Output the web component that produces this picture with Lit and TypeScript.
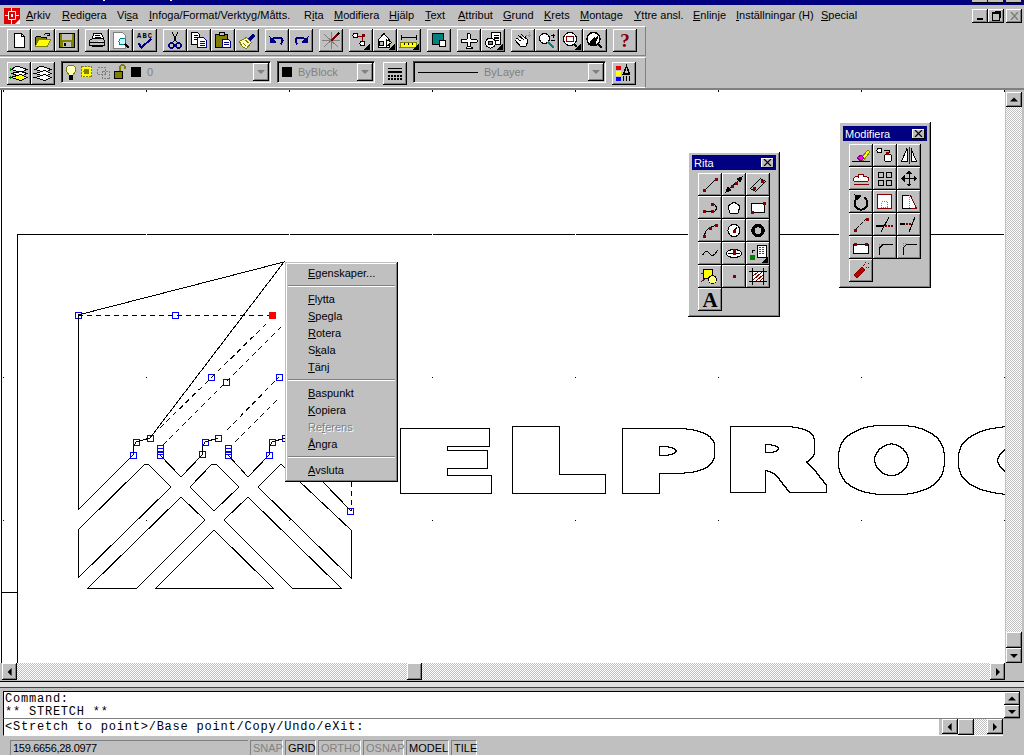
import { LitElement, css, html, svg } from "lit";
import { customElement } from "lit/decorators.js";

// small dark red grip used by the drawing tools
const grip = (x: number, y: number) =>
  svg`<rect x=${x - 1} y=${y - 1} width="3" height="3" fill="#800000" stroke="none"/>`;

const ICONS: Record<string, unknown> = {
  // standard toolbar
  new: svg`<path d="M4.500 1.500h7l3 3v11h-10z" fill="#fff"/><path d="M11.500 1.500v3h3"/>`,
  open: svg`<path d="M1.500 14.500v-9l1-1h4l1 1h5v2" fill="#808000"/><path d="M1.500 14.500l3-7h12l-3 7z" fill="#ffff00" stroke="#808000"/><path d="M9.500 3.500c1-2 3-2.500 5-1.500M15.500 0.500v3h-3"/>`,
  save: svg`<rect x="1.500" y="1.500" width="15" height="14" fill="#808000"/><rect x="4" y="2" width="10" height="6" fill="#c0c0c0" stroke="none"/><rect x="5" y="10" width="8" height="5" fill="#c0c0c0" stroke="none"/><rect x="6" y="11" width="2" height="3" fill="#000" stroke="none"/>`,
  print: svg`<path d="M5.500 1.500h8l2 5h-11z" fill="#fff"/><path d="M1.500 8.500l3-2h10l2 2v5h-15z" fill="#c0c0c0"/><path d="M1.500 10.500h15M3.500 14.500h11"/><rect x="10" y="9" width="4" height="1" fill="#ffff00" stroke="none"/><path d="M6.500 3.500h5M6.500 5h6"/>`,
  preview: svg`<path d="M1.500 0.500h9l3 3v13h-12z" fill="#fff" stroke="#808080"/><circle cx="10.500" cy="9.500" r="3.500" fill="#c0ffff" stroke="#008080"/><path d="M13 12l4 4" stroke-width="2"/>`,
  spell: svg`<text x="1" y="6" font-size="7" font-weight="700" font-family="Liberation Mono" fill="#000" stroke="none" textLength="15">ABC</text><path d="M2.500 11.500l3 4 10-9" stroke="#000080" stroke-width="2"/>`,
  cut: svg`<path d="M6.500 0.500l4 10M11.500 0.500l-4 10"/><circle cx="5.500" cy="13.500" r="2.500" stroke="#000080" stroke-width="1.500"/><circle cx="12.500" cy="13.500" r="2.500" stroke="#000080" stroke-width="1.500"/>`,
  copy: svg`<path d="M1.500 0.500h6l2 2v10h-8z" fill="#fff"/><path d="M3.500 3.500h4M3.500 5.500h4M3.500 7.500h4"/><path d="M7.500 5.500h6l3 3v7h-9z" fill="#fff" stroke="#000080"/><path d="M9.500 9.500h5M9.500 11.500h5M9.500 13.500h5" stroke="#000080"/>`,
  paste: svg`<rect x="1.500" y="2.500" width="12" height="13" fill="#808000"/><rect x="5" y="0.500" width="5" height="3" fill="#c0c0c0"/><path d="M8.500 7.500h6l2 2v6h-8z" fill="#fff" stroke="#000080"/><path d="M10 10.500h5M10 12.500h5" stroke="#000080"/>`,
  match: svg`<path d="M10 7l5-5 2 2-5 5z" fill="#000080" stroke="#000080"/><path d="M1.500 9.500l7-4 5 5-5 6c-3 0-6-4-7-7z" fill="#ffffc0" stroke="#808000"/><path d="M5 11l3 3M7.500 8l3 3" stroke="#808000"/>`,
  undo: svg`<path d="M3.500 8.500c3-4 10-4 11 0 0 2-1 3-2 4" stroke="#000080" stroke-width="2"/><path d="M2 5l1 6 5-1z" fill="#000080" stroke="#000080"/>`,
  redo: svg`<path d="M14.500 8.500c-3-4-10-4-11 0 0 2 1 3 2 4" stroke="#000080" stroke-width="2"/><path d="M16 5l-1 6-5-1z" fill="#000080" stroke="#000080"/>`,
  snapstar: svg`<path d="M9 0v17M0 8.500h18M2 2l14 13M2 15L16 2" stroke="#808080"/><path d="M9 9l6-6" stroke="#800000" stroke-width="2"/><path d="M15 3l2-2" stroke-width="2"/>`,
  osnap: svg`<circle cx="3.500" cy="3.500" r="2.500" fill="#fff"/><circle cx="10.500" cy="11.500" r="2.500" fill="#fff"/><path d="M6 4h6M10.500 5v4" stroke="#800000"/>${grip(11, 3)}<path d="M17 13v4h-4z" fill="#000"/>`,
  block: svg`<path d="M2.500 7.500L8 1.500l5 6v8h-10.500z" fill="#fff"/><rect x="3.500" y="9.500" width="4" height="4" fill="#c0c0c0"/><path d="M10.500 7.500l5 3-5 4z" fill="#ffffc0"/><path d="M18 13v4h-4z" fill="#000"/>`,
  dim: svg`<path d="M1.500 5.500h15M1.500 3v5M16.500 3v5"/><path d="M1 10h16l-1 5H0z" fill="#ffff00" stroke="#808000"/><path d="M4.500 11v2M8.500 11v2M12.500 11v2" stroke="#000"/><path d="M18 13v4h-4z" fill="#000"/>`,
  layerbox: svg`<rect x="2" y="1" width="11" height="11" fill="#008080" stroke="#000"/><rect x="9.500" y="8.500" width="6" height="6" fill="#fff" stroke="#000"/>`,
  plane: svg`<path d="M8 1.500h2l1 5.500 6 1v2l-6 .5-1 4 2 1v1H6v-1l2-1-1-4-6-.5v-2l6-1z" fill="#fff"/>`,
  xref: svg`<rect x="7.500" y="0.500" width="9" height="12" fill="#fff"/><path d="M9.500 3.500h5M9.500 6h5M9.500 8.500h5" stroke-width="1.500"/><circle cx="6.500" cy="11" r="5" fill="#fff"/><circle cx="6.500" cy="11" r="2" fill="#808080"/><path d="M18 13v4h-4z" fill="#000"/>`,
  pan: svg`<path d="M2 6l5 3M4 3l6 5M7 2l5 5M11 4l3 5-2 5-5 1-6-7" fill="#fff"/><path d="M12 3h6M15 0v6" stroke="#808080" stroke-dasharray="1 1"/>`,
  zoom: svg`<circle cx="6.500" cy="6.500" r="5" fill="#fff"/><path d="M10 10l6 6" stroke="#008080" stroke-width="2"/><path d="M13 3.500h4M15 1.500v4M13 8h4"/>`,
  zoomwin: svg`<circle cx="8" cy="7" r="6.500" fill="#fff"/><rect x="4.500" y="4.500" width="7" height="5" stroke="#800000"/><path d="M12 12l3 3" stroke-width="2"/><path d="M18 13v4h-4z" fill="#000"/>`,
  zoomprev: svg`<circle cx="7.500" cy="7" r="6.500" fill="#fff" stroke-width="1.500"/><path d="M3 12l5-6 0 3 4-5-3 8z" fill="#000"/><path d="M12 12l4 4" stroke-width="2"/>`,
  help: svg`<text x="9" y="15" text-anchor="middle" font-size="19" font-weight="700" font-family="Liberation Serif" fill="#800000" stroke="none">?</text>`,
  // layer toolbar
  layers: svg`<path d="M1 4.500L7 1l10 3.500-6 3z" fill="#fff"/><path d="M1 8.500l10 3 6-3-6-2z" fill="#fff"/><path d="M1 12.500l10 3 6-3-6-3-4 1z" fill="#ffff00"/><path d="M0 3v3M0 11v3" stroke="#008000"/>`,
  layers2: svg`<path d="M1 4.500L7 1l10 3.500-6 3z" fill="#fff"/><path d="M1 8.500l10 3 6-3-6-3z" fill="#fff"/><path d="M1 12.500l10 3 6-3-6-3z" fill="#fff"/>`,
  // draw palette
  line: svg`<path d="M3.500 14.500l11-11"/>${grip(3, 14)}${grip(15, 3)}`,
  ray: svg`<path d="M1 15.500l16-14"/><path d="M1 16l2-5 3 3zM17 1l-2 5-3-3z" fill="#000"/>${grip(7, 10)}${grip(11, 7)}`,
  xline: svg`<path d="M1.500 12.500l10-10 5 3-10 10z"/>${grip(5, 12)}${grip(13, 5)}`,
  pline: svg`<path d="M3.500 12.500h9c4-1 4-8-2-7" />${grip(3, 12)}${grip(11, 12)}${grip(11, 5)}`,
  polygon: svg`<path d="M9 3l6 4-2 7H5L3 7z" fill="#fff"/>`,
  rect: svg`<rect x="2.500" y="4.500" width="13" height="9" fill="#fff"/>${grip(3, 13)}${grip(15, 4)}`,
  arc: svg`<path d="M3.500 14.500c0-7 6-10 11-11"/>${grip(3, 14)}${grip(15, 3)}${grip(9, 6)}`,
  circle: svg`<circle cx="9" cy="8.500" r="6" fill="#fff"/><path d="M9 8.500l3-3"/>${grip(9, 9)}`,
  donut: svg`<circle cx="9" cy="8.500" r="5" stroke-width="3.500"/>`,
  spline: svg`<path d="M1.500 10.500c3-6 5-5 7-2s4 3 8-3"/>`,
  ellipse: svg`<ellipse cx="9" cy="8.500" rx="7.500" ry="4" fill="#fff"/><path d="M3 8.500h12"/>${grip(9, 8)}${grip(9, 5)}`,
  insert: svg`<rect x="8.500" y="0.500" width="9" height="12" fill="#fff"/><path d="M10 2h6M10 4h6M10 6h6M10 8h6" stroke="#008000" stroke-dasharray="2 1"/><rect x="1" y="10" width="5" height="5" fill="#008000" stroke="none"/><path d="M3 8c0-3 1-3 3-3"/><path d="M18 13v4h-4z" fill="#000"/>`,
  hatch: svg`<rect x="2.500" y="1.500" width="9" height="9" fill="#ffff00"/><circle cx="11.500" cy="11.500" r="4" fill="#ffff80"/><path d="M0 5.500h3M0 13.500l5-3" stroke="#800000"/>`,
  point: svg`${grip(9, 8)}`,
  region: svg`<rect x="3.500" y="3.500" width="11" height="10" fill="#fff" stroke="#800000"/><path d="M4 8l5-4M4 12l9-8M7 13l7-6M11 13l3-3" stroke="#800000"/><path d="M0 3.500h18M0 13.500h18M3.500 0v17M14.500 0v17"/>`,
  text: svg`<text x="9" y="16" text-anchor="middle" font-size="21" font-weight="700" font-family="Liberation Serif" fill="#000" stroke="none">A</text>`,
  // modify palette
  erase: svg`<path d="M0 14.500h18" /><path d="M8 12l8-9 2 2-7 9z" fill="#ffff00" stroke="#808000"/><path d="M5 11l4-3 3 3-3 3z" fill="#ff00ff" stroke="#800080"/>`,
  copyobj: svg`<circle cx="3.500" cy="3.500" r="2.500" fill="#fff"/><circle cx="12" cy="11" r="4" fill="#fff"/><path d="M8 3h6l-1 3"/>${grip(11, 6)}`,
  mirror: svg`<path d="M9 0v17" stroke="#800000"/><path d="M7 1.500v13H1.500z" fill="#fff"/><path d="M11 1.500v13h5.500z" fill="#fff"/>`,
  offset: svg`<path d="M2 11c-2-3 2-5 4-4 0-4 6-4 6 0 3-1 6 1 4 4z" fill="#fff" stroke="#800000"/><path d="M1.500 14.500h15" stroke="#800000"/>`,
  array: svg`<rect x="2.500" y="2.500" width="5" height="5"/><rect x="10.500" y="2.500" width="5" height="5"/><rect x="2.500" y="10.500" width="5" height="5"/><rect x="10.500" y="10.500" width="5" height="5"/>`,
  move: svg`<path d="M9 2v13M3 8.500h12"/><path d="M9 1l2 2H7zM9 16l2-2H7zM2 8.500l2-2v4zM16 8.500l-2-2v4z" fill="#000"/>`,
  rotate: svg`<path d="M6 4.500a6.500 6.500 0 1 0 6 0" stroke-width="2"/><path d="M3 2l6 1-4 4z" fill="#000"/>`,
  scale: svg`<path d="M1.500 1.500h14v14h-14z" fill="#fff" stroke="#800000"/><path d="M5.500 8.500h6v6h-6z" stroke="#808080" stroke-dasharray="1 1"/>`,
  stretch: svg`<path d="M2.500 2.500h8l6 13h-14z" fill="#fff"/><path d="M10.500 2.500l6 13h-6" stroke="#800000"/><path d="M9.500 2v13" stroke="#808080" stroke-dasharray="1 1"/>`,
  lbreak: svg`<path d="M4 13l3-3M8 9l3-3M12 5l2-2" stroke="#000"/>${grip(3, 14)}${grip(15, 3)}`,
  trim: svg`<path d="M13 1L5 16"/><path d="M0 9.500h8" stroke-width="2"/><path d="M9 9.500h8" stroke="#800000" stroke-width="2" stroke-dasharray="2 1"/>`,
  extend: svg`<path d="M15 1L9 16"/><path d="M0 7.500h5" stroke-width="2"/><path d="M6 7.500h6" stroke="#800000" stroke-width="2" stroke-dasharray="2 1"/>`,
  stretchbox: svg`<rect x="1.500" y="5.500" width="15" height="9" fill="#fff"/>${grip(3, 5)}${grip(14, 5)}`,
  chamfer: svg`<path d="M3.500 16V9l4-4H17"/><path d="M3.500 8V5.500H6" stroke="#808080" stroke-dasharray="1 1"/>`,
  fillet: svg`<path d="M3.500 16V10c0-3 3-5 6-5H17"/><path d="M3.500 7V4.500H7" stroke="#808080" stroke-dasharray="1 1"/>`,
  explode: svg`<path d="M2 13l8-8 3 3-8 8z" fill="#c00000" stroke="#800000"/><path d="M11 4l2-2M14 6l3-1M13 1l1-1M16 2l2-1" stroke="#800000" stroke-dasharray="1 1"/>`,
};

const TOOLBAR_ONE = [
  ["new", "open", "save"],
  ["print", "preview", "spell"],
  ["cut", "copy", "paste", "match"],
  ["undo", "redo"],
  ["snapstar"],
  ["osnap", "block", "dim"],
  ["layerbox"],
  ["plane", "xref"],
  ["pan", "zoom", "zoomwin", "zoomprev"],
  ["help"],
];

const RITA = ["line", "ray", "xline", "pline", "polygon", "rect", "arc", "circle", "donut", "spline", "ellipse", "insert", "hatch", "point", "region", "text"];
const MODIFIERA = ["erase", "copyobj", "mirror", "offset", "array", "move", "rotate", "scale", "stretch", "lbreak", "trim", "extend", "stretchbox", "chamfer", "fillet", "explode"];

// label, index of the underlined letter, left edge on the menu bar
const MENU: [string, number, number][] = [
  ["Arkiv", 0, 26], ["Redigera", 0, 62], ["Visa", 2, 117], ["Infoga/Format/Verktyg/Måtts.", 0, 149],
  ["Rita", 1, 304], ["Modifiera", 0, 334], ["Hjälp", 0, 389], ["Text", 0, 425], ["Attribut", 0, 458],
  ["Grund", 0, 503], ["Krets", 0, 544], ["Montage", 0, 580], ["Yttre ansl.", 0, 634], ["Enlinje", 0, 693],
  ["Inställningar (H)", 0, 736], ["Special", 0, 821],
];

const CONTEXT: (null | [string, number, boolean?])[] = [
  ["Egenskaper...", 0], null,
  ["Flytta", 0], ["Spegla", 0], ["Rotera", 0], ["Skala", 1], ["Tänj", 0], null,
  ["Baspunkt", 0], ["Kopiera", 0], ["Referens", 2, true], ["Ångra", 0], null,
  ["Avsluta", 0],
];

// x, scale for each outlined letter of the title block; square letters get the fatter outline
const LOGO_SQUARE: [string, number, number][] = [["E", 399, 1.66], ["L", 509.7, 1.73]];
const LOGO_ROUND: [string, number, number][] = [["P", 615.8, 1.67], ["R", 724.3, 1.6], ["O", 837.8, 1.56], ["C", 957, 1.75]];

const GRID_X = [3, 146, 289, 432, 575, 718, 861, 1004];
const GRID_Y = [377, 520];

const HANDLES = [
  [78, 315], [175, 315], [211, 377], [226, 382], [279, 377], [136, 442], [150, 438], [133, 455],
  [160, 448], [160, 451], [160, 455], [205, 442], [218, 438], [202, 454], [228, 448], [228, 451],
  [228, 455], [272, 442], [285, 438], [269, 455], [350, 511],
];

const SOLID = [
  "M78 315L284 262L150 438M78 315V510L133 455V448L136 442L150 438",
  "M160 455L181 477L202 455V448L205 442L218 438M228 455L248 477L269 455V448L272 442L285 438",
  "M78 530L145 464H148L171 487L78 578Z",
  "M190 487L212 464H216L239 487L214 511Z",
  "M88 588H137L205 520L181 497Z",
  "M156 588H273L214 530Z",
  "M224 520L248 497L341 588H292Z",
  "M258 487L281 464L351 530V578Z",
  "M323 482L351 511",
  "M17 663V234H1005M1 90V663M1 592H17M0 663H1005",
];

const DASHED = [
  "M78 315H272",
  "M160 428L267 323",
  "M163 445L283 325",
  "M227 430L279 377",
  "M235 442L280 397",
  "M351 482V511",
];

const arrow = (dir: "up" | "down" | "left" | "right") => html`<span class="arrow ${dir}"></span>`;

const logoLetters = (letters: [string, number, number][]) =>
  letters.map(([ch, x, sx]) => svg`
    <text transform="translate(${x} 490) scale(${sx} 1)" font-family="DejaVu Sans" font-weight="700" font-size="81">${ch}</text>
  `);

const outlineFilter = (id: string, radius: string) => svg`
  <filter id=${id} filterUnits="userSpaceOnUse" x="380" y="410" width="720" height="100">
    <feComponentTransfer in="SourceAlpha" result="hard">
      <feFuncA type="discrete" tableValues="0 1"/>
    </feComponentTransfer>
    <feMorphology in="hard" operator="dilate" radius=${radius} result="fat"/>
    <feMorphology in="fat" operator="dilate" radius="1" result="edge"/>
    <feComposite in="edge" in2="fat" operator="out"/>
  </filter>
`;

@customElement("app-root")
export class AppRoot extends LitElement {
  private icon(name: string) {
    return html`<svg class="ico" width="18" height="17" viewBox="0 0 18 17">${ICONS[name]}</svg>`;
  }

  private tool(name: string) {
    return html`<div class="btn">${this.icon(name)}</div>`;
  }

  private accel(label: string, index: number) {
    return html`${label.slice(0, index)}<u>${label[index]}</u>${label.slice(index + 1)}`;
  }

  private palette(title: string, cls: string, tools: string[]) {
    return html`
      <div class="palette ${cls}">
        <div class="caption">
          <span>${title}</span>
          <div class="caption-close">
            <svg width="9" height="7" viewBox="0 0 9 7"><path d="M1 0l7 7M8 0L1 7" stroke="#000" fill="none" stroke-width="1.200"/></svg>
          </div>
        </div>
        <div class="palette-grid">${tools.map((t) => this.tool(t))}</div>
      </div>
    `;
  }

  private renderDrawing() {
    return html`
      <svg class="drawing" width="1005" height="573" viewBox="0 90 1005 573">
        <defs>
          ${outlineFilter("outline-square", "10 3")}
          ${outlineFilter("outline-round", "5 3")}
        </defs>
        ${HANDLES.map(([x, y]) => svg`<path d="M${x - 3} ${y - 3}h7v7h-7zM${x - 2} ${y - 2}v5h5v-5z" fill="#0000ff"/>`)}
        ${SOLID.map((d) => svg`<path d=${d} fill="none" stroke="#000" shape-rendering="crispEdges"/>`)}
        ${DASHED.map((d) => svg`<path d=${d} fill="none" stroke="#000" stroke-dasharray="5 4" shape-rendering="crispEdges"/>`)}
        ${GRID_X.map((x) => svg`
          <rect x=${x} y="234" width="1" height="1" fill="#fff"/>
          <rect x=${x} y="662" width="1" height="1" fill="#fff"/>
          <rect x=${x} y="90" width="1" height="2" fill="#000"/>
          ${GRID_Y.map((y) => svg`<rect x=${x} y=${y} width="1" height="1" fill="#000"/>`)}
        `)}
        <g filter="url(#outline-square)">${logoLetters(LOGO_SQUARE)}</g>
        <g filter="url(#outline-round)">${logoLetters(LOGO_ROUND)}</g>
        <rect x="269" y="312" width="7" height="7" fill="#ff0000"/>
      </svg>
    `;
  }

  render() {
    return html`
      <div class="titlebar">
        <span class="title-bit one"></span><span class="title-bit two"></span>
        <div class="title-buttons"><i></i><i></i><i class="last"></i></div>
      </div>

      <div class="menubar">
        <svg class="app-icon" width="16" height="16" viewBox="0 0 16 16">
          <rect width="16" height="16" fill="#e00000"/>
          <path d="M4.500 3.500h7v8h-7zM1 7.500h3.500M11.500 7.500H15M7.500 0v3.500M7.500 11.500V16" fill="none" stroke="#fff"/>
          <rect x="7" y="6" width="2" height="3" fill="#fff"/>
          <path d="M11 16l5-5v5z" fill="#fff"/>
        </svg>
        ${MENU.map(([label, i, x], n) => html`<span class="menu-item" style="margin-left:${n === 0 ? x - 21 : x - MENU[n - 1][2] - this.menuWidth(MENU[n - 1][0])}px;width:${this.menuWidth(label)}px">${this.accel(label, i)}</span>`)}
        <div class="win-buttons">
          <div class="win-btn"><span class="glyph-min"></span></div>
          <div class="win-btn"><span class="glyph-restore"></span></div>
          <div class="win-btn close">
            <svg width="9" height="8" viewBox="0 0 9 8"><path d="M1 0l7 8M8 0L1 8" stroke="#808080" stroke-width="1.500" fill="none"/></svg>
          </div>
        </div>
      </div>

      <div class="toolbars">
        <div class="toolbar first">
          ${TOOLBAR_ONE.map((group) => html`<div class="group">${group.map((t) => this.tool(t))}</div>`)}
        </div>
        <div class="toolbar second">
          <div class="group">${this.tool("layers")}${this.tool("layers2")}</div>
          <div class="combo layer">
            <svg class="ico" width="65" height="17" viewBox="0 0 65 17">
              <path d="M3 11C-1 7 0 1 5 1s6 6 2 10z" fill="#ffffc0" stroke="#808000"/>
              <path d="M3.500 11.500h3v4h-3z" fill="#000"/>
              <rect x="15.500" y="2.500" width="10" height="10" fill="#ffff00" stroke="#808000" stroke-dasharray="2 1"/>
              <circle cx="20.500" cy="7.500" r="3" fill="#808000" stroke="none"/>
              <path d="M31.500 3.500h8v7h-8zM36.500 7.500h7v7h-7z" stroke="#808080" stroke-dasharray="2 1"/>
              <rect x="48.500" y="7.500" width="8" height="7" fill="#808000"/>
              <path d="M54 7V3c0-3 5-3 5 0v2" stroke="#808000" stroke-width="1.500"/>
            </svg>
            <span class="swatch"></span>
            <span class="combo-text">0</span>
            <span class="combo-arrow"></span>
          </div>
          <div class="combo color">
            <span class="swatch"></span>
            <span class="combo-text">ByBlock</span>
            <span class="combo-arrow"></span>
          </div>
          <div class="btn linetype-btn">
            <svg class="ico" width="18" height="17" viewBox="0 0 18 17">
              <path d="M2 3.500h14"/><path d="M2 7h14" stroke-width="2"/><path d="M2 11h14M2 13.500h14" stroke-width="2" stroke-dasharray="2 1"/>
            </svg>
          </div>
          <div class="combo linetype">
            <span class="line-sample"></span>
            <span class="combo-text">ByLayer</span>
            <span class="combo-arrow"></span>
          </div>
          <div class="btn">
            <svg class="ico" width="18" height="17" viewBox="0 0 18 17">
              <rect x="1" y="1" width="5" height="4" fill="#e00000" stroke="none"/>
              <rect x="1" y="6" width="5" height="5" fill="#ffff00" stroke="none"/>
              <rect x="1" y="12" width="5" height="4" fill="#0000ff" stroke="none"/>
              <path d="M11.500 1l-3 8h6zM8.500 11v5M11.500 11v5M14.500 11v5" stroke-width="1.500"/>
            </svg>
          </div>
        </div>
      </div>
      <div class="canvas-rule"></div>

      <div class="workspace">
        <div class="canvas">${this.renderDrawing()}</div>
        <div class="vscroll">
          <div class="sbtn">${arrow("up")}</div>
          <div class="track"></div>
          <div class="sbtn plain"></div>
          <div class="sbtn">${arrow("down")}</div>
        </div>
      </div>

      <div class="hscroll">
        <div class="sbtn">${arrow("left")}</div>
        <div class="track"><div class="sbtn plain"></div></div>
        <div class="sbtn">${arrow("right")}</div>
        <div class="corner"></div>
      </div>
      <div class="divider"></div>

      <div class="command">
        <div class="cmd-history">
          <div class="cmd-lines"><div>Command:</div><div>** STRETCH **</div></div>
          <div class="cmd-spin">
            <div class="sbtn">${arrow("up")}</div>
            <div class="sbtn">${arrow("down")}</div>
          </div>
        </div>
        <div class="cmd-input">
          <div class="cmd-field">&lt;Stretch to point&gt;/Base point/Copy/Undo/eXit:</div>
          <div class="cmd-hscroll">
            <div class="sbtn">${arrow("left")}</div>
            <div class="sbtn plain"></div>
            <div class="track"></div>
            <div class="sbtn">${arrow("right")}</div>
          </div>
        </div>
      </div>

      <div class="status">
        <div class="coords">159.6656,28.0977</div>
        <div class="pane off snap">SNAP</div>
        <div class="pane grid">GRID</div>
        <div class="pane off ortho">ORTHO</div>
        <div class="pane off osnap">OSNAP</div>
        <div class="pane model">MODEL</div>
        <div class="pane tile">TILE</div>
      </div>

      ${this.palette("Rita", "rita", RITA)}
      ${this.palette("Modifiera", "modifiera", MODIFIERA)}

      <div class="context">
        ${CONTEXT.map((item) =>
          item
            ? html`<div class="context-item ${item[2] ? "disabled" : ""}">${this.accel(item[0], item[1])}</div>`
            : html`<div class="context-sep"></div>`
        )}
      </div>
    `;
  }

  // the old system font is a little narrower or wider per label, so each slot keeps its reference width
  private menuWidth(label: string) {
    const i = MENU.findIndex((m) => m[0] === label);
    const next = i < MENU.length - 1 ? MENU[i + 1][2] : 864;
    return next - MENU[i][2] - 8;
  }

  static styles = css`
    :host {
      display: flex;
      flex-direction: column;
      position: relative;
      width: 1024px;
      height: 755px;
      overflow: hidden;
      background: #c0c0c0;
      font-family: "Liberation Sans", Arial, sans-serif;
      font-size: 11px;
      color: #000;
    }

    .ico {
      display: block;
      flex: none;
      fill: none;
      stroke: #000;
      stroke-width: 1;
      shape-rendering: crispEdges;
      overflow: visible;
    }

    .titlebar {
      position: relative;
      height: 5px;
      background: #000080;
    }

    .title-bit {
      position: absolute;
      top: 0;
      height: 1px;
      width: 2px;
      background: #fff;
    }

    .title-bit.one { left: 103px; }
    .title-bit.two { left: 170px; }

    .title-buttons {
      position: absolute;
      left: 972px;
      top: 0;
      display: flex;
      gap: 1px;
    }

    .title-buttons i {
      display: block;
      width: 15px;
      height: 2px;
      background: #c0c0c0;
      border-bottom: 1px solid #000;
    }

    .title-buttons .last { margin-left: 2px; }

    .menubar {
      display: flex;
      align-items: center;
      height: 21px;
      flex: none;
      position: relative;
      padding-left: 5px;
    }

    .app-icon {
      position: absolute;
      left: 4px;
      top: 3px;
    }

    .menu-item {
      flex: none;
      margin-top: -1px;
      white-space: nowrap;
      padding-left: 16px;
      box-sizing: content-box;
    }

    .menu-item:not(:first-of-type) { padding-left: 0; }

    .win-buttons {
      position: absolute;
      left: 972px;
      top: 4px;
      display: flex;
    }

    .win-btn {
      width: 16px;
      height: 14px;
      display: flex;
      align-items: center;
      justify-content: center;
      box-shadow: inset -1px -1px #000, inset 1px 1px #fff, inset -2px -2px #808080;
      position: relative;
    }

    .win-btn.close { margin-left: 2px; }

    .glyph-min {
      width: 6px;
      height: 2px;
      background: #000;
      margin-top: 6px;
    }

    .glyph-restore {
      width: 6px;
      height: 6px;
      border: 1px solid #000;
      border-top-width: 2px;
      box-shadow: 2px -2px 0 -1px #000;
    }

    .toolbars {
      flex: none;
      display: flex;
      flex-direction: column;
      gap: 1px;
      width: 646px;
    }

    .toolbar {
      display: flex;
      box-sizing: border-box;
      gap: 6px;
      padding-left: 7px;
      border-top: 1px solid #fff;
      border-right: 1px solid #808080;
      border-bottom: 1px solid #808080;
    }

    .toolbar.first {
      height: 30px;
      padding-top: 2px;
    }

    .toolbar.second {
      height: 31px;
      padding-top: 4px;
      border-bottom-color: #fff;
    }

    .group { display: flex; }

    .btn {
      flex: none;
      display: flex;
      align-items: center;
      justify-content: center;
      width: 24px;
      height: 23px;
      box-sizing: border-box;
      background: #c0c0c0;
      box-shadow: inset -1px -1px #000, inset 1px 1px #fff, inset -2px -2px #808080;
    }

    .linetype-btn { margin-left: 2px; }

    .combo {
      flex: none;
      display: flex;
      align-items: center;
      position: relative;
      box-sizing: border-box;
      height: 22px;
      margin-top: -1px;
      padding-left: 4px;
      border: 1px solid;
      border-color: #404040 #fff #fff #404040;
      box-shadow: inset 1px 1px #000;
      color: #808080;
      font-size: 11px;
    }

    .combo.layer { width: 210px; }
    .combo.color { width: 98px; }
    .combo.linetype { width: 193px; }

    .swatch {
      width: 10px;
      height: 10px;
      background: #000;
      margin-right: 5px;
      flex: none;
    }

    .line-sample {
      width: 60px;
      height: 1px;
      background: #000;
      margin: 0 5px 0 0;
    }

    .combo-text { margin-left: 1px; }

    .combo-arrow {
      position: absolute;
      right: 1px;
      top: 1px;
      width: 16px;
      height: 18px;
      box-shadow: inset -1px -1px #000, inset 1px 1px #fff, inset -2px -2px #808080;
    }

    .combo-arrow::after {
      content: "";
      position: absolute;
      left: 4px;
      top: 7px;
      border: 4px solid transparent;
      border-top: 4px solid #808080;
      border-bottom: 0;
    }

    .canvas-rule {
      flex: none;
      height: 2px;
      background: #808080;
    }

    .workspace {
      flex: none;
      display: flex;
      height: 573px;
    }

    .canvas {
      width: 1005px;
      background: #fff;
      overflow: hidden;
    }

    .drawing { display: block; }

    .vscroll {
      display: flex;
      flex-direction: column;
      width: 16px;
      margin-left: 1px;
      padding-top: 2px;
    }

    .track {
      flex: 1;
      background: repeating-conic-gradient(#c0c0c0 0 25%, #fff 0 50%) 0 0 / 2px 2px;
    }

    .sbtn {
      flex: none;
      position: relative;
      width: 15px;
      height: 15px;
      background: #c0c0c0;
      box-shadow: inset -1px -1px #000, inset 1px 1px #fff, inset -2px -2px #808080;
    }

    .vscroll .sbtn { width: 16px; }
    .sbtn.plain { height: 16px; }

    .arrow {
      position: absolute;
      left: 50%;
      top: 50%;
      width: 0;
      height: 0;
      border: 4px solid transparent;
    }

    .arrow.up {
      border-top: 0;
      border-bottom-color: #000;
      transform: translate(-50%, -60%);
    }

    .arrow.down {
      border-bottom: 0;
      border-top-color: #000;
      transform: translate(-50%, -50%);
    }

    .arrow.left {
      border-left: 0;
      border-right-color: #000;
      transform: translate(-60%, -50%);
    }

    .arrow.right {
      border-right: 0;
      border-left-color: #000;
      transform: translate(-50%, -50%);
    }

    .hscroll {
      flex: none;
      display: flex;
      height: 17px;
      padding-left: 2px;
    }

    .hscroll .sbtn { height: 17px; }

    .hscroll .track .sbtn {
      width: 15px;
      margin-left: 390px;
    }

    .corner {
      width: 19px;
      flex: none;
    }

    .divider {
      flex: none;
      height: 5px;
      margin-top: 1px;
      background: #dfdfdf;
      border-top: 1px solid #000;
      border-bottom: 1px solid #404040;
    }

    .command {
      flex: none;
      height: 46px;
      margin-top: 3px;
      padding-left: 3px;
      font-family: "Liberation Mono", monospace;
      font-size: 12px;
      letter-spacing: 0.78px;
    }

    .cmd-history {
      display: flex;
      height: 28px;
      border-top: 1px solid #000;
      border-left: 1px solid #000;
      border-bottom: 1px solid #808080;
      box-sizing: border-box;
      margin-right: 4px;
    }

    .cmd-lines {
      flex: 1;
      background: #fff;
      line-height: 13px;
      padding: 1px 0 0 1px;
    }

    .cmd-spin {
      flex: none;
      width: 16px;
    }

    .cmd-spin .sbtn {
      width: 16px;
      height: 13px;
    }

    .cmd-input {
      display: flex;
      width: 1000px;
      height: 17px;
      border-left: 1px solid #000;
      border-bottom: 1px solid #fff;
      box-sizing: border-box;
    }

    .cmd-field {
      flex: 1;
      background: #fff;
      line-height: 16px;
      padding-left: 1px;
    }

    .cmd-hscroll {
      flex: none;
      display: flex;
      width: 64px;
      box-sizing: border-box;
      padding-left: 3px;
      background: #c0c0c0;
    }

    .cmd-hscroll .sbtn { width: 16px; }

    .status {
      flex: none;
      display: flex;
      height: 18px;
      padding: 3px 0 0 10px;
      box-sizing: border-box;
      gap: 2px;
    }

    .coords {
      width: 238px;
      box-sizing: border-box;
      padding-left: 2px;
      border-top: 1px solid #808080;
      border-left: 1px solid #808080;
      line-height: 14px;
      letter-spacing: -0.3px;
    }

    .pane {
      box-sizing: border-box;
      padding-left: 2px;
      border-top: 1px solid #808080;
      border-left: 1px solid #808080;
      border-right: 1px solid #fff;
      line-height: 14px;
      font-size: 11px;
    }

    .pane.off { color: #808080; }
    .snap { width: 33px; }
    .grid { width: 31px; }
    .ortho { width: 43px; }
    .osnap { width: 41px; }
    .model { width: 43px; }
    .tile { width: 26px; }

    .palette {
      position: absolute;
      box-sizing: border-box;
      width: 92px;
      padding: 3px 4px;
      background: #c0c0c0;
      box-shadow: inset -1px -1px #000, inset 1px 1px #fff, inset -2px -2px #808080;
    }

    .rita {
      left: 688px;
      top: 152px;
      height: 165px;
    }

    .modifiera {
      left: 839px;
      top: 122px;
      height: 166px;
      padding-top: 4px;
    }

    .caption {
      display: flex;
      align-items: center;
      justify-content: space-between;
      height: 15px;
      padding: 0 2px;
      background: #000080;
      color: #fff;
      font-size: 11px;
    }

    .caption-close {
      display: flex;
      align-items: center;
      justify-content: center;
      width: 13px;
      height: 10px;
      background: #c0c0c0;
      box-shadow: inset -1px -1px #000, inset 1px 1px #fff;
    }

    .palette-grid {
      display: grid;
      grid-template-columns: repeat(3, 24px);
      grid-auto-rows: 23px;
      margin: 3px 0 0 6px;
    }

    .context {
      position: absolute;
      left: 285px;
      top: 262px;
      box-sizing: border-box;
      width: 113px;
      height: 220px;
      padding: 3px 2px;
      background: #c0c0c0;
      box-shadow: inset -1px -1px #000, inset 1px 1px #c0c0c0, inset -2px -2px #808080, inset 2px 2px #fff;
    }

    .context-item {
      height: 17px;
      line-height: 17px;
      padding-left: 21px;
      white-space: nowrap;
    }

    .context-item.disabled {
      color: #808080;
      text-shadow: 1px 1px #fff;
    }

    .context-sep {
      height: 2px;
      margin: 3px 1px 4px 1px;
      background: #808080;
      border-bottom: 1px solid #fff;
      box-sizing: border-box;
    }
  `;
}

declare global {
  interface HTMLElementTagNameMap {
    "app-root": AppRoot;
  }
}
